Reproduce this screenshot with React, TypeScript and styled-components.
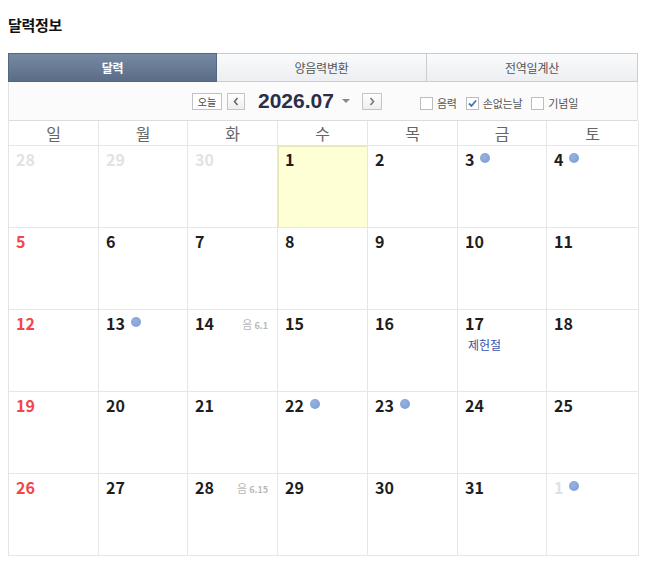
import styled, { createGlobalStyle } from "styled-components";

const GlobalStyle = createGlobalStyle`
    body{
        margin: 8px;
        background: #FFFFFF;
        font-family: "Noto Sans CJK KR", "Noto Sans", sans-serif;
    }
    *{
        box-sizing: border-box;
    }
`;

type Kind = "prev" | "next" | "normal";

interface DayCell{
    day: number;
    kind?: Kind;
    dot?: boolean;
    lunar?: string;
    holiday?: string;
    today?: boolean;
}

const TABS = ["달력", "양음력변환", "전역일계산"];
const WEEK = ["일", "월", "화", "수", "목", "금", "토"];

const WEEKS: DayCell[][] = [
    [
        { day: 28, kind: "prev" },
        { day: 29, kind: "prev" },
        { day: 30, kind: "prev" },
        { day: 1, today: true },
        { day: 2 },
        { day: 3, dot: true },
        { day: 4, dot: true },
    ],
    [{ day: 5 }, { day: 6 }, { day: 7 }, { day: 8 }, { day: 9 }, { day: 10 }, { day: 11 }],
    [
        { day: 12 },
        { day: 13, dot: true },
        { day: 14, lunar: "6.1" },
        { day: 15 },
        { day: 16 },
        { day: 17, holiday: "제헌절" },
        { day: 18 },
    ],
    [
        { day: 19 },
        { day: 20 },
        { day: 21 },
        { day: 22, dot: true },
        { day: 23, dot: true },
        { day: 24 },
        { day: 25 },
    ],
    [
        { day: 26 },
        { day: 27 },
        { day: 28, lunar: "6.15" },
        { day: 29 },
        { day: 30 },
        { day: 31 },
        { day: 1, kind: "next", dot: true },
    ],
];

const OPTIONS = [
    { label: "음력", checked: false },
    { label: "손없는날", checked: true },
    { label: "기념일", checked: false },
];

const App = () => {
    return (
        <CalendarBox>
            <GlobalStyle />
            <Title>달력정보</Title>
            <Board>
                <TabBar>
                    {TABS.map((t, i) => (
                        <Tab key={t} $active={i === 0}>{t}</Tab>
                    ))}
                </TabBar>
                <Toolbar>
                    <TodayBtn>오늘</TodayBtn>
                    <ArrowBtn $side="prev">
                        <svg width="6" height="9" viewBox="0 0 6 9">
                            <path d="M4.5 1 L1.5 4.5 L4.5 8" fill="none" stroke="#666" strokeWidth="1.6" />
                        </svg>
                    </ArrowBtn>
                    <MonthTitle>2026.07</MonthTitle>
                    <Caret />
                    <ArrowBtn $side="next">
                        <svg width="6" height="9" viewBox="0 0 6 9">
                            <path d="M1.5 1 L4.5 4.5 L1.5 8" fill="none" stroke="#777" strokeWidth="1.6" />
                        </svg>
                    </ArrowBtn>
                    <Options>
                        {OPTIONS.map((o) => (
                            <Option key={o.label}>
                                <CheckBox>
                                    {o.checked && (
                                        <svg width="11" height="11" viewBox="0 0 11 11">
                                            <path d="M2 5.5 L4.5 8 L9 2.5" fill="none" stroke="#3a73c0" strokeWidth="1.8" />
                                        </svg>
                                    )}
                                </CheckBox>
                                <span>{o.label}</span>
                            </Option>
                        ))}
                    </Options>
                </Toolbar>
                <Grid>
                    {WEEK.map((w) => (
                        <WeekHead key={w}>{w}</WeekHead>
                    ))}
                    {WEEKS.map((week, r) =>
                        week.map((c, i) => (
                            <Cell key={`${r}-${i}`} $today={!!c.today}>
                                <CellTop>
                                    <DayNum $kind={c.kind || "normal"} $sunday={i === 0}>{c.day}</DayNum>
                                    {c.dot && <Dot />}
                                    {c.lunar && (
                                        <Lunar>
                                            <em>음</em>{c.lunar}
                                        </Lunar>
                                    )}
                                </CellTop>
                                {c.holiday && <Holiday>{c.holiday}</Holiday>}
                            </Cell>
                        ))
                    )}
                </Grid>
            </Board>
        </CalendarBox>
    );
};

const CalendarBox = styled.article`
    width: 630px;
`;

const Title = styled.h2`
    margin: 7px 0 18px;
    font-size: 15px;
    line-height: 20px;
    font-weight: 700;
    color: #111111;
    letter-spacing: -0.02em;
`;

const Board = styled.section`
    width: 630px;
    border-left: 1px solid #e3e3e3;
`;

const TabBar = styled.div`
    display: grid;
    grid-template-columns: 208px 210px 211px;
    height: 29px;
`;

const Tab = styled.div<{ $active: boolean }>`
    display: flex;
    align-items: center;
    justify-content: center;
    font-size: 12px;
    letter-spacing: -0.02em;
    border: 1px solid ${({ $active }) => ($active ? "#56677f" : "#c9ccd1")};
    border-left: ${({ $active }) => ($active ? "1px solid #56677f" : "none")};
    margin-left: ${({ $active }) => ($active ? "-1px" : "0")};
    width: ${({ $active }) => ($active ? "209px" : "auto")};
    font-weight: ${({ $active }) => ($active ? 700 : 400)};
    color: ${({ $active }) => ($active ? "#FFFFFF" : "#555555")};
    background: ${({ $active }) =>
        $active
            ? "linear-gradient(#7689a3, #5b6d86)"
            : "linear-gradient(#fafbfc, #eceef1)"};
`;

const Toolbar = styled.div`
    height: 39px;
    display: flex;
    align-items: center;
    padding-left: 183px;
    background: #fbfbfb;
    border-right: 1px solid #e3e3e3;
    border-bottom: 1px solid #dcdcdc;
`;

const TodayBtn = styled.button`
    width: 30px;
    height: 17px;
    padding: 0;
    margin: 0 5px 0 0;
    border: 1px solid #c2c2c2;
    background: #FFFFFF;
    font-family: "Noto Sans CJK KR", sans-serif;
    font-size: 10px;
    line-height: 15px;
    color: #444444;
`;

const ArrowBtn = styled.button<{ $side: "prev" | "next" }>`
    width: ${({ $side }) => ($side === "prev" ? "18px" : "20px")};
    height: 17px;
    padding: 0;
    margin: ${({ $side }) => ($side === "prev" ? "0 13px 0 0" : "0 0 0 12px")};
    display: flex;
    align-items: center;
    justify-content: center;
    border: 1px solid #c4c4c4;
    background: linear-gradient(#ffffff, #eeeeee);
`;

const MonthTitle = styled.span`
    font-family: "Liberation Sans", Arial, sans-serif;
    font-size: 21px;
    font-weight: 700;
    line-height: 24px;
    color: #2b2e47;
`;

const Caret = styled.span`
    width: 0;
    height: 0;
    margin-left: 8px;
    margin-top: -1px;
    border-left: 4px solid transparent;
    border-right: 4px solid transparent;
    border-top: 4px solid #888888;
`;

const Options = styled.div`
    display: flex;
    align-items: center;
    gap: 9px;
    margin-left: 38px;
    margin-top: 4px;
`;

const Option = styled.label`
    display: flex;
    align-items: center;
    gap: 4px;
    font-size: 11px;
    color: #555555;
    letter-spacing: -0.02em;
`;

const CheckBox = styled.span`
    width: 13px;
    height: 13px;
    display: flex;
    align-items: center;
    justify-content: center;
    border: 1px solid #bdbdbd;
    background: #FFFFFF;
`;

const Grid = styled.div`
    display: grid;
    grid-template-columns: 90px 89px 90px 90px 90px 89px 92px;
    grid-template-rows: 25px repeat(5, 82px);
`;

const WeekHead = styled.div`
    display: flex;
    align-items: center;
    justify-content: center;
    font-size: 16px;
    color: #666666;
    border-right: 1px solid #e6e6e6;
    border-bottom: 1px solid #e6e6e6;
    background: #FFFFFF;
`;

const Cell = styled.div<{ $today: boolean }>`
    padding: 2px 9px 0 7px;
    border-right: 1px solid #e6e6e6;
    border-bottom: 1px solid #e6e6e6;
    background: ${({ $today }) => ($today ? "#ffffd6" : "#FFFFFF")};
    box-shadow: ${({ $today }) => ($today ? "inset 1px 1px 0 #e6e6b8" : "none")};
`;

const CellTop = styled.div`
    display: flex;
    align-items: center;
    height: 22px;
`;

const DayNum = styled.span<{ $kind: Kind; $sunday: boolean }>`
    font-size: 16px;
    font-weight: 700;
    color: ${({ $kind, $sunday }) =>
        $kind !== "normal" ? "#e2e2e2" : $sunday ? "#f2464c" : "#1e1e1e"};
`;

const Dot = styled.span`
    width: 10px;
    height: 10px;
    margin: -3px 0 0 6px;
    border-radius: 50%;
    background: radial-gradient(circle at 40% 35%, #95b1e0, #7a9bd2);
`;

const Lunar = styled.span`
    margin-left: auto;
    margin-top: 1px;
    font-size: 9px;
    font-weight: 700;
    color: #b8b8b8;

    em{
        font-style: normal;
        font-weight: 400;
        font-size: 11px;
        margin-right: 2px;
    }
`;

const Holiday = styled.div`
    margin: 2px 0 0 3px;
    font-size: 12px;
    color: #3553a8;
`;

export default App;
